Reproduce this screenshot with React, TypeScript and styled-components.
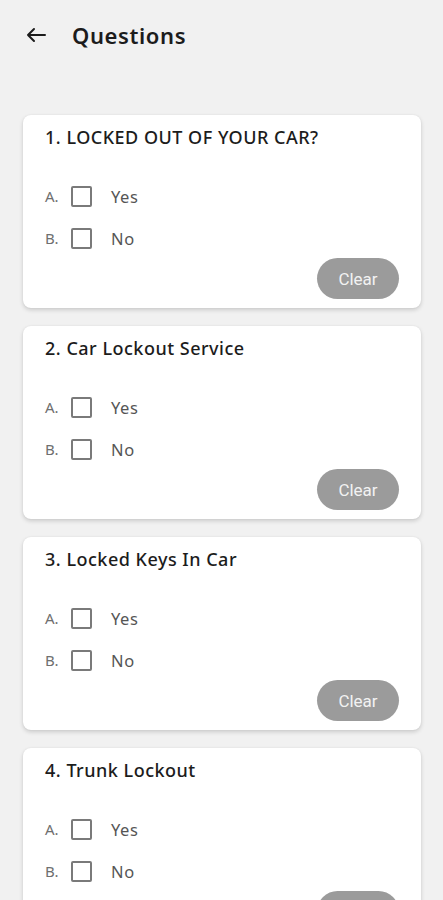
import React from 'react';
import styled, { createGlobalStyle } from 'styled-components';

interface Question {
    id: number;
    title: string;
}

const questions: Array<Question> = [
    { id: 1, title: 'LOCKED OUT OF YOUR CAR?' },
    { id: 2, title: 'Car Lockout Service' },
    { id: 3, title: 'Locked Keys In Car' },
    { id: 4, title: 'Trunk Lockout' },
];

const options = [
    { letter: 'A.', label: 'Yes' },
    { letter: 'B.', label: 'No' },
];

const bg = `#f1f1f1`;
const ink = `#1c1c1c`;
const grey = `#6f6f6f`;

const GlobalStyle = createGlobalStyle`
    html, body {
        margin: 0;
        padding: 0;
        background: ${bg};
        overflow: hidden;
    }
    body {
        font-family: "Noto Sans", "DejaVu Sans", sans-serif;
    }
`;

const Page = styled.div`
    height: 900px;
    background: ${bg};
`;

const Header = styled.header`
    height: 70px;
    display: flex;
    align-items: center;
    padding-left: 26px;
    gap: 26px;
    svg {
        display: block;
    }
`;

const Title = styled.h1`
    margin: 0;
    font-size: 22px;
    font-weight: 600;
    color: ${ink};
    letter-spacing: 0.6px;
`;

const List = styled.section`
    display: flex;
    flex-direction: column;
    gap: 18px;
    margin: 45px 22px 0 23px;
`;

const Card = styled.div`
    background: #fff;
    border-radius: 8px;
    box-shadow: 0 2px 4px rgba(0, 0, 0, 0.16), 0 0 2px rgba(0, 0, 0, 0.06);
    padding: 12px 22px 9px;
    display: flex;
    flex-direction: column;
`;

const QuestionTitle = styled.h2`
    margin: 0;
    height: 20px;
    line-height: 20px;
    font-size: 18px;
    font-weight: 500;
    letter-spacing: 0.5px;
    color: ${ink};
`;

const Options = styled.div`
    margin-top: 28px;
    display: flex;
    flex-direction: column;
`;

const Row = styled.label`
    height: 42px;
    display: flex;
    align-items: center;
`;

const Letter = styled.span`
    width: 26px;
    font-size: 15px;
    color: ${grey};
`;

const Box = styled.span`
    width: 17px;
    height: 17px;
    border: 2px solid #7a7a7a;
    border-radius: 2px;
    box-sizing: content-box;
`;

const OptionLabel = styled.span`
    margin-left: 19px;
    font-size: 16.5px;
    letter-spacing: 0.6px;
    color: #555;
`;

const ClearButton = styled.button`
    align-self: flex-end;
    margin-top: -1px;
    width: 82px;
    height: 41px;
    border: none;
    border-radius: 21px;
    background: #9b9b9b;
    color: #f2f2f2;
    font-family: Roboto, "Liberation Sans", sans-serif;
    font-size: 17px;
`;

const BackArrow = () => (
    <svg width="20" height="16" viewBox="0 0 20 16" fill="none" stroke={ink} strokeWidth="2" strokeLinecap="round" strokeLinejoin="round">
        <path d="M19 8H2M8 2L2 8L8 14" />
    </svg>
);

const QuestionCard = ({ id, title }: Question) => (
    <Card>
        <QuestionTitle>{id}. {title}</QuestionTitle>
        <Options>
            {options.map((o) => (
                <Row key={o.letter}>
                    <Letter>{o.letter}</Letter>
                    <Box />
                    <OptionLabel>{o.label}</OptionLabel>
                </Row>
            ))}
        </Options>
        <ClearButton>Clear</ClearButton>
    </Card>
);

const App = () => {
    return (
        <Page>
            <GlobalStyle />
            <Header>
                <BackArrow />
                <Title>Questions</Title>
            </Header>
            <List>
                {questions.map((q) => (
                    <QuestionCard key={q.id} id={q.id} title={q.title} />
                ))}
            </List>
        </Page>
    );
};

export default App;
